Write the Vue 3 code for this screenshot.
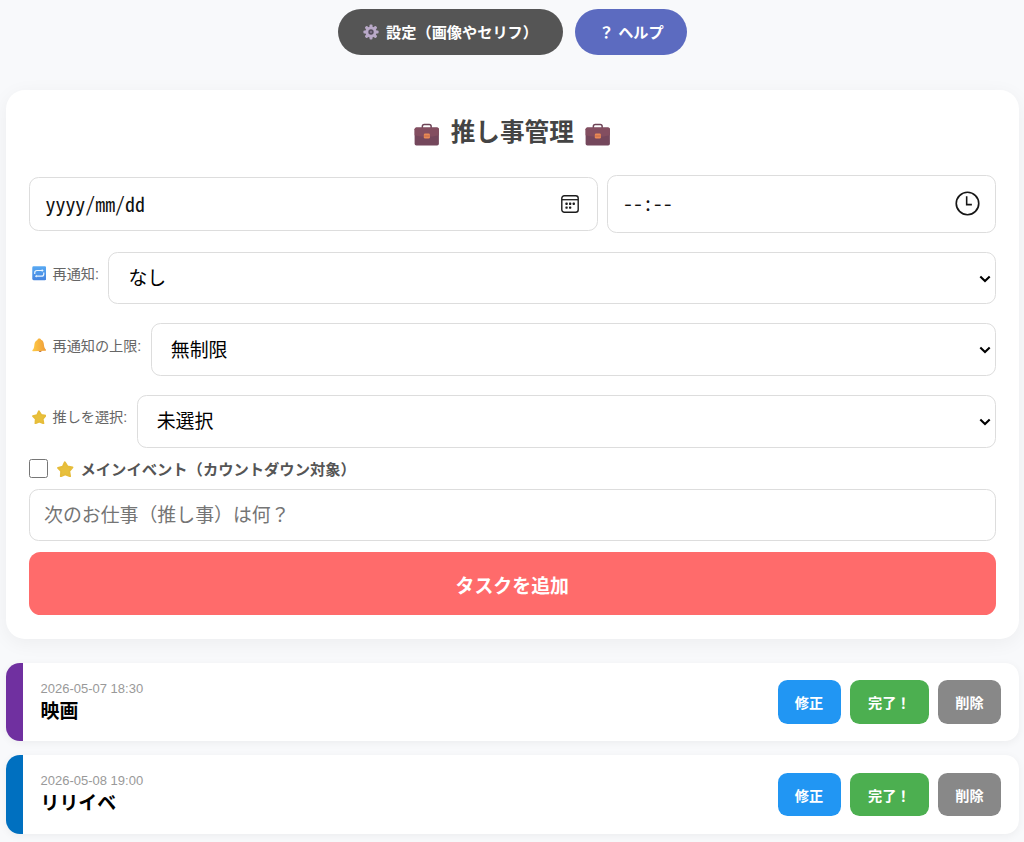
<template>
	<div class="page">
		<header class="toolbar">
			<button class="pill settings">
				<svg class="gear" viewBox="0 0 16 16">
					<g fill="#b9a9c8">
						<rect v-for="n in 4" :key="n" x="6.5" y="0.4" width="3" height="15.2" rx="1" :transform="`rotate(${n * 45} 8 8)`" />
						<circle cx="8" cy="8" r="5.6" />
					</g>
					<circle cx="8" cy="8" r="2.7" fill="#554d5d" />
					<circle cx="8" cy="8" r="1" fill="#8b7d99" />
				</svg>
				<span>設定（画像やセリフ）</span>
			</button>
			<button class="pill help">？ ヘルプ</button>
		</header>

		<main class="card">
			<h2>
				<svg v-for="side in ['left', 'right']" :key="side" :class="['bag', side]" viewBox="0 0 26 24">
					<path d="M8.5 5V3.5Q8.5 1.5 10.5 1.5h5Q17.5 1.5 17.5 3.5V5" fill="none" stroke="#6d4356" stroke-width="1.5" />
					<rect x="0.6" y="4.5" width="24.8" height="18.5" rx="1.8" fill="#74475c" />
					<path d="M0.6 6.3q0-1.8 1.8-1.8h21.2q1.8 0 1.8 1.8v6.2q-12.4 3.2-24.8 0z" fill="#834e60" />
					<rect x="10" y="10.8" width="6.2" height="5" rx="1.3" fill="#e98a55" />
					<path d="M10.5 13.3h5.2" stroke="#b85f48" stroke-width="0.8" />
				</svg>
				<span class="title">推し事管理</span>
			</h2>

			<!-- Datum und Uhrzeit -->
			<div class="date-row">
				<div class="field date-field">
					<span class="date-text">yyyy/mm/dd</span>
					<svg class="calendar" viewBox="0 0 18 18">
						<rect x="0.8" y="0.8" width="16.4" height="16.4" rx="2.5" fill="none" stroke="#1c1c1c" stroke-width="1.4" />
						<path d="M1 4.7h16" stroke="#1c1c1c" stroke-width="1.3" />
						<g fill="#1c1c1c">
							<rect v-for="d in dots" :key="d.join()" :x="d[0]" :y="d[1]" width="2.3" height="2.3" rx="0.6" />
						</g>
					</svg>
				</div>
				<div class="field time-field">
					<span class="time-text">--:--</span>
					<svg class="clock" viewBox="0 0 24 24">
						<circle cx="12" cy="12" r="10.8" fill="none" stroke="#161616" stroke-width="1.6" />
						<path d="M11.2 5v8.1h5" fill="none" stroke="#161616" stroke-width="1.5" />
					</svg>
				</div>
			</div>

			<!-- Auswahlfelder -->
			<div v-for="row in rows" :key="row.label" class="select-row">
				<label :for="row.icon">
					<svg v-if="row.icon === 'repeat'" class="emoji" viewBox="0 0 16 16">
						<defs>
							<linearGradient id="blue" x2="0" y2="1">
								<stop stop-color="#58a9f3" />
								<stop offset="1" stop-color="#4584df" />
							</linearGradient>
						</defs>
						<rect x="0.3" y="0.3" width="15.4" height="15.4" rx="1.5" fill="url(#blue)" />
						<path d="M3 8.7V7.5Q3 5 5.5 5H11.500M13 7.300V8.700q0 2.500-2.500 2.500H4.500" fill="none" stroke="#eaf5ff" stroke-width="1.3" />
						<path d="M10.8 3.400l2.100 1.600-2.100 1.600zM5.200 9.600l-2.100 1.600 2.100 1.600z" fill="#eaf5ff" />
					</svg>
					<svg v-else-if="row.icon === 'bell'" class="emoji" viewBox="0 0 16 16">
						<defs>
							<linearGradient id="gold">
								<stop stop-color="#ffcb45" />
								<stop offset="1" stop-color="#ee9b38" />
							</linearGradient>
						</defs>
						<circle cx="9" cy="13.8" r="1.7" fill="#bd7448" />
						<path d="M7.5 0.5C9 0.2 9.8 1 10 2c2.4 1 3 3 3.2 5.8.2 2.6 1 3.7 2.4 5.2q.4 1-.8 1L1 14.6Q0 14.5.6 13.3C2.2 11.5 2.3 10 2.6 7.6 2.9 4.7 4 3 6 2.2 6.1 1.2 6.5.6 7.5.5z" fill="url(#gold)" />
					</svg>
					<svg v-else class="emoji" viewBox="0 0 16 16">
						<path :d="star" fill="#e8c03c" stroke="#e6bc39" stroke-width="1.8" stroke-linejoin="round" />
					</svg>
					<span>{{ row.label }}</span>
				</label>
				<div class="select-box">
					<select :id="row.icon" v-model="row.value">
						<option>{{ row.value }}</option>
					</select>
					<svg class="chevron" viewBox="0 0 12 8">
						<path d="M1.3 1.6L6 6.1l4.7-4.5" fill="none" stroke="#000" stroke-width="2.1" />
					</svg>
				</div>
			</div>

			<label class="main-event">
				<input v-model="isMain" type="checkbox">
				<svg class="emoji big" viewBox="0 0 16 16">
					<path :d="star" fill="#e8c03c" stroke="#e6bc39" stroke-width="1.8" stroke-linejoin="round" />
				</svg>
				<span>メインイベント（カウントダウン対象）</span>
			</label>
			<input v-model="taskText" class="task-input" type="text" placeholder="次のお仕事（推し事）は何？">
			<button class="add-button">タスクを追加</button>
		</main>

		<!-- Aufgabenliste -->
		<section class="tasks">
			<article v-for="task in tasks" :key="task.title" :class="['task', task.color]">
				<div class="task-info">
					<div class="task-date">{{ task.date }}</div>
					<div class="task-title">{{ task.title }}</div>
				</div>
				<div class="actions">
					<button class="edit">修正</button>
					<button class="done">完了！</button>
					<button class="delete">削除</button>
				</div>
			</article>
		</section>
	</div>
</template>

<script setup>
import { ref } from 'vue';

const isMain = ref(false);
const taskText = ref('');

const rows = ref([
	{ icon: 'repeat', label: '再通知:', value: 'なし' },
	{ icon: 'bell', label: '再通知の上限:', value: '無制限' },
	{ icon: 'star', label: '推しを選択:', value: '未選択' },
]);

const tasks = ref([
	{ date: '2026-05-07 18:30', title: '映画', color: 'purple' },
	{ date: '2026-05-08 19:00', title: 'リリイベ', color: 'blue' },
]);

// Punkte im Kalendersymbol
const dots = [[4.4, 7.6], [8, 7.6], [11.6, 7.6], [4.4, 11.4], [8, 11.4]];

const star = 'M7.6 1.2L10.2 5.3L15 6.2L11.900 9.900L12.700 14.800L8 12.900L3.700 14.800L4 9.900L1 6.700L5.500 5.600Z';
</script>

<style>
body {
	background: #f8f9fb;
	overflow: hidden;
}
</style>

<style scoped>
.page {
	height: 842px;
	box-sizing: border-box;
	padding: 8.5px 5px 0 6px;
	overflow: hidden;
	background: #f8f9fb;
	font-family: "Liberation Sans", "Noto Sans CJK JP", sans-serif;
}

.page * {
	box-sizing: border-box;
}

button,
input,
select {
	font-family: inherit;
	margin: 0;
}

button {
	border: none;
	padding: 0;
	color: white;
	font-weight: bold;
	cursor: pointer;
}

svg {
	flex: none;
	display: block;
}

/* Kopfzeile */
.toolbar {
	display: flex;
	justify-content: center;
	gap: 12px;
	height: 81px;
}

.pill {
	display: flex;
	align-items: center;
	justify-content: center;
	height: 46px;
	padding-bottom: 2px;
	border-radius: 23px;
	font-size: 15.2px;
}

.settings {
	width: 225.5px;
	gap: 7px;
	background: #555;
}

.help {
	width: 112px;
	background: #5c6bc0;
}

.gear {
	width: 16px;
	height: 16px;
	margin-top: 2px;
}

/* Formular */
.card {
	height: 549.5px;
	padding: 23px 23.5px 0 23px;
	border-radius: 19px;
	background: white;
	box-shadow: 0 4px 19px rgba(0, 0, 0, 0.05);
}

h2 {
	display: flex;
	align-items: center;
	justify-content: center;
	gap: 11px;
	height: 40px;
	margin: 0 0 22.5px;
	color: #444;
	font-size: 24.6px;
	line-height: 42px;
}

.bag {
	width: 25.5px;
	height: 23.5px;
	margin-top: 4px;
}

.right {
	order: 2;
}

.title {
	order: 1;
}

.date-row {
	display: flex;
	align-items: center;
	gap: 9.5px;
	height: 57.5px;
	margin-bottom: 19px;
}

.field {
	display: flex;
	align-items: center;
	justify-content: space-between;
	border: 1px solid #ddd;
	border-radius: 9.5px;
	font-family: "Noto Sans CJK JP", sans-serif;
	font-feature-settings: "hwid";
	font-size: 19.9px;
	color: #111;
}

.date-field {
	width: 568.5px;
	height: 53.5px;
	padding: 0 17.5px 0 15.5px;
}

.date-text {
	white-space: nowrap;
}

.time-text {
	margin-top: -3px;
}

.calendar {
	width: 18px;
	height: 18px;
}

.time-field {
	flex: 1;
	height: 57.5px;
	padding: 0 15px;
}

.clock {
	width: 25px;
	height: 25px;
}

.select-row {
	display: flex;
	gap: 9.7px;
	height: 52.7px;
	margin-bottom: 19px;
}

.select-row label {
	display: flex;
	align-items: center;
	gap: 6.5px;
	height: 43px;
	padding-left: 2.6px;
	color: #666;
	font-size: 14.2px;
	letter-spacing: -0.08px;
	white-space: nowrap;
}

.emoji {
	width: 14.5px;
	height: 14.5px;
	margin-top: 1px;
}

.select-box {
	position: relative;
	flex: 1;
}

select {
	width: 100%;
	height: 100%;
	padding: 1px 19px 0;
	border: 1px solid #ddd;
	border-radius: 9.5px;
	background: white;
	color: black;
	font-size: 18.9px;
	appearance: none;
}

.chevron {
	position: absolute;
	right: 4.5px;
	top: 23px;
	width: 12px;
	height: 8px;
	pointer-events: none;
}

.main-event {
	display: flex;
	align-items: center;
	height: 20px;
	margin: -8.5px 0 10.5px;
	color: #555;
	font-size: 15.3px;
	font-weight: bold;
}

.main-event input {
	width: 19px;
	height: 19px;
	margin-right: 9px;
	border: 1px solid #767676;
	border-radius: 2.5px;
	background: white;
	appearance: none;
}

.main-event .big {
	width: 16.5px;
	height: 16.5px;
	margin-top: 2px;
	margin-right: 7px;
}

.task-input {
	display: block;
	width: 100%;
	height: 52px;
	padding: 2px 14px 0;
	border: 1px solid #ddd;
	border-radius: 9.5px;
	font-size: 18.9px;
	outline: none;
}

.task-input::placeholder {
	color: #757575;
}

.add-button {
	display: block;
	width: 100%;
	height: 63px;
	margin-top: 11.7px;
	padding-top: 1px;
	border-radius: 11.5px;
	background: #ff6b6b;
	font-size: 18.9px;
}

/* Liste */
.tasks {
	display: flex;
	flex-direction: column;
	gap: 14px;
	margin-top: 23.5px;
}

.task {
	display: flex;
	align-items: center;
	justify-content: space-between;
	height: 78.5px;
	padding: 0 18px 0 17.5px;
	border-left: 17px solid;
	border-radius: 14px;
	background: white;
	box-shadow: 0 2px 9px rgba(0, 0, 0, 0.05);
}

.purple {
	border-color: #7030a0;
}

.blue {
	border-color: #0070c0;
}

.task-info {
	padding-top: 3px;
}

.task-date {
	color: #999;
	font-size: 13px;
	line-height: 16px;
}

.task-title {
	color: black;
	font-size: 18.9px;
	font-weight: bold;
	line-height: 29px;
}

.actions {
	display: flex;
	gap: 9.5px;
	padding-top: 0.8px;
}

.actions button {
	width: 63px;
	height: 43.5px;
	border-radius: 9.5px;
	font-size: 14.2px;
}

.edit {
	background: #2196f3;
}

.actions .done {
	width: 78.5px;
	background: #4caf50;
}

.delete {
	background: #888;
}
</style>
